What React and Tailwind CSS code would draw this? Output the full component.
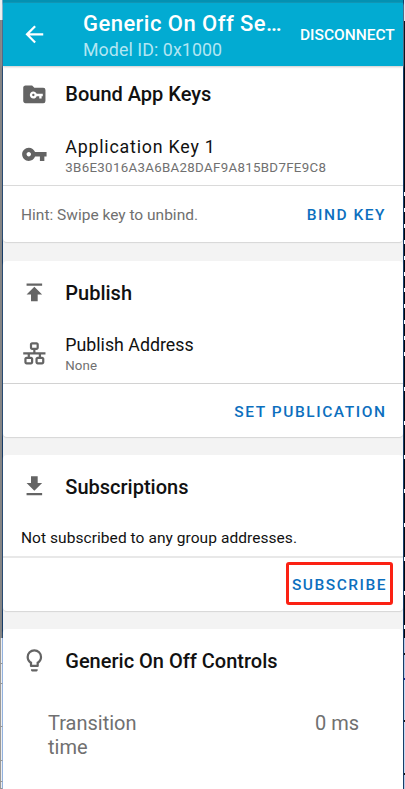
const icons = {
  back: 'M20 11H7.83l5.59-5.59L12 4l-8 8 8 8 1.41-1.41L7.83 13H20v-2z',
  folder: 'M20,6A2,2 0 0,1 22,8V18A2,2 0 0,1 20,20H4C2.89,20 2,19.1 2,18V6C2,4.89 2.89,4 4,4H10L12,6H20Z',
  key: 'M12.65 10C11.83 7.67 9.61 6 7 6c-3.31 0-6 2.69-6 6s2.69 6 6 6c2.61 0 4.83-1.67 5.65-4H17v4h4v-4h2v-4H12.65zM7 14c-1.1 0-2-.9-2-2s.9-2 2-2 2 .9 2 2-.9 2-2 2z',
  publish: 'M5 4v2h14V4H5zm0 10h4v6h6v-6h4l-7-7-7 7z',
  lan: 'M10,2C8.89,2 8,2.89 8,4V7C8,8.11 8.89,9 10,9H11V11H2V13H6V15H5C3.89,15 3,15.89 3,17V20C3,21.11 3.89,22 5,22H9C10.11,22 11,21.11 11,20V17C11,15.89 10.11,15 9,15H8V13H16V15H15C13.89,15 13,15.89 13,17V20C13,21.11 13.89,22 15,22H19C20.11,22 21,21.11 21,20V17C21,15.89 20.11,15 19,15H18V13H22V11H13V9H14C15.11,9 16,8.11 16,7V4C16,2.89 15.11,2 14,2H10M10,4H14V7H10V4M5,17H9V20H5V17M15,17H19V20H15V17Z',
  download: 'M19 9h-4V3H9v6H5l7 7 7-7zM5 18v2h14v-2H5z',
  bulb: 'M12,2A7,7 0 0,1 19,9C19,11.38 17.81,13.47 16,14.74V17A1,1 0 0,1 15,18H9A1,1 0 0,1 8,17V14.74C6.19,13.47 5,11.38 5,9A7,7 0 0,1 12,2M9,21V20H15V21A1,1 0 0,1 14,22H10A1,1 0 0,1 9,21M12,4A5,5 0 0,0 7,9C7,11.05 8.23,12.81 10,13.58V16H14V13.58C15.77,12.81 17,11.05 17,9A5,5 0 0,0 12,4Z',
}

function Icon({ name, className = 'text-[#646464]' }) {
  return (
    <svg viewBox="0 0 24 24" fill="currentColor" className={`h-[26.7px] w-[26.7px] shrink-0 ${className}`}>
      <path d={icons[name]} />
      {name === 'folder' && (
        <g transform="translate(7.4 6.2) scale(0.53)">
          <path d={icons.key} fill="#fff" />
        </g>
      )}
    </svg>
  )
}

function Title({ icon, children, className, textClass = 'pt-px' }) {
  return (
    <div className={`flex items-center ${className}`}>
      <Icon name={icon} />
      <h2 className={`ml-[17.6px] text-[20px] leading-[26px] font-medium text-[#111] ${textClass}`}>{children}</h2>
    </div>
  )
}

function Action({ children, className = '' }) {
  return <button className={`text-[15.5px] leading-5 font-medium text-[#0c6fbe] ${className}`}>{children}</button>
}

function Card({ children, className }) {
  return <section className={`flex flex-col bg-white shadow-[0_1px_1px_#d6d6d6] ${className}`}>{children}</section>
}

export default function App() {
  return (
    <div className="flex h-[789px] w-[405px] overflow-hidden bg-[#f3f3f3] font-[Roboto,sans-serif]">
      <aside className="flex w-[3px] shrink-0 flex-col">
        <div className="h-5 border-r border-[#6aa5c8] bg-[#eee]" />
        <div className="h-[618px] border-r border-[#173c68] bg-[#858585]" />
        {['h-[26px]', 'h-[20px]', 'h-[43px]', 'h-[34px]', 'h-[21px]', 'h-[7px]'].map((h, i) => (
          <div key={i} className={`${h} border-r border-b border-r-[#8bafe0] border-b-[#969696] bg-[linear-gradient(90deg,#999_1px,#eee_1px)]`} />
        ))}
      </aside>

      <main className="flex w-[400px] shrink-0 flex-col">
        <div className="h-[3px] shrink-0 bg-[#0391b2]" />
        <header className="z-10 flex h-[63px] shrink-0 items-center bg-[#02abd2] pl-[18px] text-white shadow-[0_1px_2px_#ccc]">
          <Icon name="back" className="text-white" />
          <div className="ml-[35.3px] w-[210px] pt-[3px] whitespace-nowrap">
            <h1 className="text-[22px] leading-[27px] font-medium tracking-[0.46px]">Generic On Off Se…</h1>
            <p className="text-[17.8px] leading-[26px] tracking-[0.08px] text-[#b3e6f2]">Model ID: 0x1000</p>
          </div>
          <button className="ml-[7px] pt-[2px] text-[15.5px] font-medium">DISCONNECT</button>
        </header>

        <Card className="h-[176px] shrink-0 rounded-b-[4px]">
          <Title icon="folder" textClass="" className="mt-[15px] h-[26px] pl-[18px]">Bound App Keys</Title>
          <div className="mt-[28px] flex h-[46px] pl-[18px]">
            <Icon name="key" className="mt-[6px] text-[#646464]" />
            <div className="ml-[17.6px]">
              <p className="text-[17.8px] leading-[24px] tracking-[0.8px] text-[#111]">Application Key 1</p>
              <p className="text-[13.3px] leading-[18px] tracking-[0.31px] text-[#707070]">3B6E3016A3A6BA28DAF9A815BD7FE9C8</p>
            </div>
          </div>
          <div className="mt-[4px] flex flex-1 items-center justify-between border-t border-[#dadada] pt-px pr-[17px] pl-[18px]">
            <p className="text-[15.5px] leading-5 text-[#707070]">Hint: Swipe key to unbind.</p>
            <Action className="tracking-[1.5px]">BIND KEY</Action>
          </div>
        </Card>

        <Card className="mt-[19px] h-[176px] shrink-0 rounded-[4px]">
          <Title icon="publish" textClass="pt-[2px]" className="mt-[18px] h-[26px] pl-[18px]">Publish</Title>
          <div className="mt-[28px] flex h-[46px] pl-[18px]">
            <Icon name="lan" className="mt-[7px] text-[#646464]" />
            <div className="ml-[17.6px]">
              <p className="text-[17.8px] leading-[24px] text-[#111]">Publish Address</p>
              <p className="text-[13.3px] leading-[18px] tracking-[0.1px] text-[#707070]">None</p>
            </div>
          </div>
          <div className="mt-[4px] flex flex-1 items-center justify-end border-t border-[#d2d2d2] pt-[2px] pr-[16.5px]">
            <Action className="tracking-[1.56px]">SET PUBLICATION</Action>
          </div>
        </Card>

        <Card className="mt-[18px] h-[156px] shrink-0 rounded-[4px]">
          <Title icon="download" className="mt-[18px] h-[26px] pl-[18px]">Subscriptions</Title>
          <p className="mt-[29px] pl-[18px] text-[15.5px] leading-5 tracking-[0.06px] text-[#111]">Not subscribed to any group addresses.</p>
          <div className="mt-[8px] flex flex-1 items-center justify-end border-t-2 border-[#e8e8e8] pr-[10px] pb-[2px]">
            <div className="flex h-[43px] w-[107px] items-center justify-center rounded-[3px] border-[3px] border-[#fb2113] pt-[2px]">
              <Action className="tracking-[1.5px] whitespace-nowrap">SUBSCRIBE</Action>
            </div>
          </div>
        </Card>

        <Card className="mt-[18px] h-[161px] shrink-0 rounded-t-[4px]">
          <Title icon="bulb" textClass="pt-[2px]" className="mt-[18px] h-[26px] pl-[18px]">Generic On Off Controls</Title>
          <div className="mt-[38px] flex justify-between pr-[44px] pl-[45px] text-[20px] leading-[24px] text-[#707070]">
            <p className="w-[110px]">Transition time</p>
            <p>0 ms</p>
          </div>
        </Card>
      </main>

      <aside className="flex w-[2px] shrink-0 flex-col border-l border-[#173c68]">
        <div className="h-[21px] bg-[#e8e8f0]" />
        <div className="h-[171px] bg-[#05060d]" />
        <div className="h-[165px] bg-[repeating-linear-gradient(#fff_0_4px,#05060d_4px_16px)]" />
        <div className="h-[281px] bg-[repeating-linear-gradient(#05060d_0_30px,#fff_30px_34px)]" />
        <div className="h-[151px] bg-[linear-gradient(#bcc8e6_0_15px,#111_15px_17px,#bcc8e6_17px_40px,#111d90_40px_42px,#c7d8f2_42px_82px,#111_82px_84px,#c7d8f2_84px_135px,#111_135px_137px,#bcc8e6_137px)]" />
      </aside>
    </div>
  )
}
